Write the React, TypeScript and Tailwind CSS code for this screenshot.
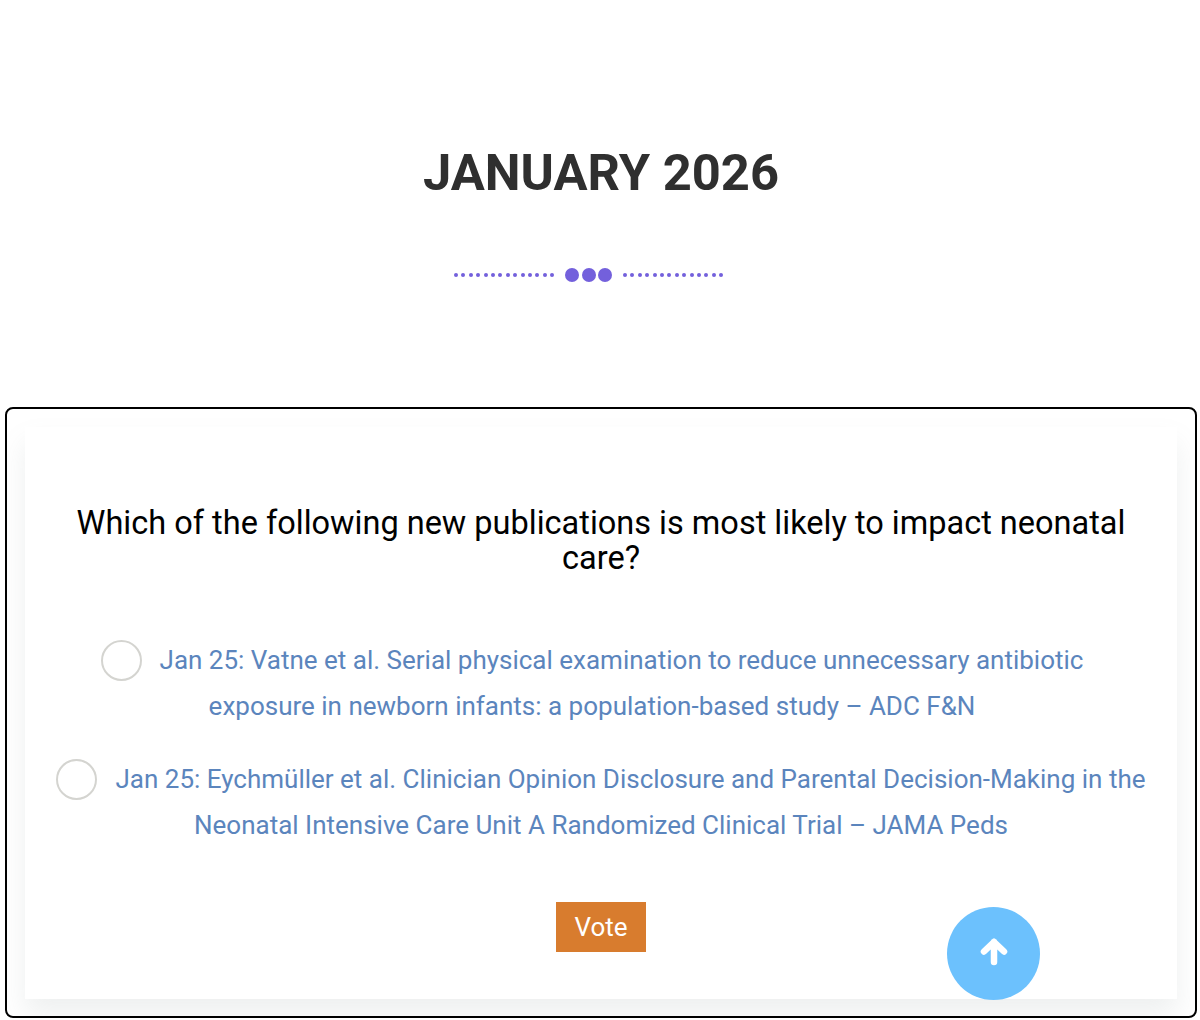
const options = [
  {
    text: "Jan 25: Vatne et al. Serial physical examination to reduce unnecessary antibiotic exposure in newborn infants: a population-based study – ADC F&N",
    cls: "pr-[18px] text-[26px] leading-[46px] text-[#5b85bd]",
  },
  {
    text: "Jan 25: Eychmüller et al. Clinician Opinion Disclosure and Parental Decision-Making in the Neonatal Intensive Care Unit A Randomized Clinical Trial – JAMA Peds",
    cls: "text-[26px] leading-[46px] text-[#5b85bd]",
  },
];

function Dots() {
  return (
    <div className="flex gap-[3.4px]">
      {Array.from({ length: 14 }).map((_, i) => (
        <span key={i} className="w-1 h-1 rounded-full bg-[#7360dc]" />
      ))}
    </div>
  );
}

export default function App() {
  return (
    <div className="relative h-[1020px] bg-white overflow-hidden font-['Roboto',sans-serif]">
      <h1 className="pt-[143px] pl-[2px] text-center text-[50.7px] leading-[60px] font-bold text-[#2f2f2f]">JANUARY 2026</h1>
      <div className="mt-[64px] flex items-center pl-[454px] gap-[11px] h-4">
        <Dots />
        <div className="flex gap-[2.5px]">
          <span className="w-[14px] h-[14px] rounded-full bg-[#7360dc]" />
          <span className="w-[14px] h-[14px] rounded-full bg-[#7360dc]" />
          <span className="w-[14px] h-[14px] rounded-full bg-[#7360dc]" />
        </div>
        <Dots />
      </div>
      <div className="mt-[124px] ml-[5px] mr-[3px] h-[611px] border-2 border-black rounded-lg px-[18px] pt-[18px] overflow-hidden">
        <div className="h-[572px] bg-white shadow-[0_16px_26px_rgba(120,140,140,0.13)] px-[29px] pt-[79px] text-center">
          <p className="text-[32.5px] leading-[35px] text-black">Which of the following new publications is most likely to impact neonatal care?</p>
          <div className="mt-[61px] flex flex-col gap-[27px]">
            {options.map((o) => (
              <p key={o.text} className={o.cls}>
                <span className="inline-block align-middle w-[41px] h-[41px] rounded-full border-2 border-[#d4d4d0] bg-white mr-[18px] -mt-[3px]" />
                {o.text}
              </p>
            ))}
          </div>
          <button className="mt-[54px] w-[90px] h-[50px] bg-[#d87c2e] text-white text-[26px]">Vote</button>
        </div>
      </div>
      <div className="absolute left-[947px] top-[907px] w-[93px] h-[93px] rounded-full bg-[#6cc1fd] flex items-center justify-center">
        <svg width="28" height="28" viewBox="0 0 28 28" className="-mt-[4px]" fill="none" stroke="white" strokeWidth="6.5" strokeLinecap="round" strokeLinejoin="round">
          <path d="M14 4 L4 13.5 M14 4 L24 13.5 M14 4 V24" />
        </svg>
      </div>
    </div>
  );
}
